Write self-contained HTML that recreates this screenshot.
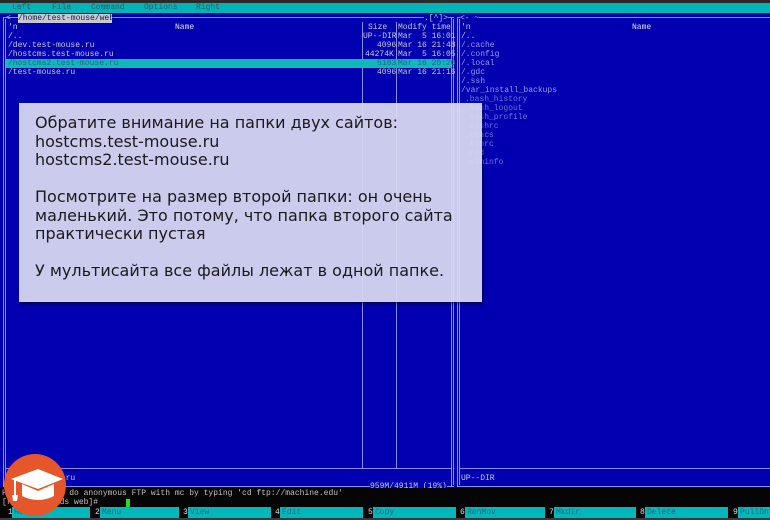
<!DOCTYPE html>
<html><head><meta charset="utf-8"><style>
*{margin:0;padding:0;box-sizing:border-box}
body{width:770px;height:520px;overflow:hidden;background:#0000b0;position:relative;font-family:"Liberation Mono",monospace;font-size:8px;color:#c8c8d8}
.a{position:absolute;white-space:pre;line-height:9px}
.top{position:absolute;left:0;top:0;width:770px;height:3px;background:#2a2a2a}
.menu{position:absolute;left:0;top:3px;width:770px;height:10px;background:#00b4b8;color:#2a5a6a}
.l{position:absolute;background:#8c8ce0}
.blk{position:absolute;left:0;top:488px;width:770px;height:32px;background:#050505}
.fk{position:absolute;top:507px;height:11px;background:#00b8bc;color:#1a6a7a;padding-left:2px;line-height:11px}
.fn{position:absolute;top:507px;color:#ddd;line-height:11px}
.box{position:absolute;left:19px;top:103px;width:463px;height:199px;background:rgba(218,218,242,0.93);box-shadow:1px 2px 3px rgba(0,0,0,.5);font-family:"DejaVu Sans",sans-serif;font-size:16px;color:#1a1a1a;padding:11px 0 0 16px;line-height:18.5px;white-space:pre}
</style></head><body>
<div class="top"></div>
<div class="menu"><span class="a" style="left:12px;top:0">Left</span><span class="a" style="left:52px;top:0">File</span><span class="a" style="left:91px;top:0">Command</span><span class="a" style="left:144px;top:0">Options</span><span class="a" style="left:196px;top:0">Right</span></div>
<div class="l" style="left:3px;top:17px;width:1px;height:470px"></div>
<div class="l" style="left:5px;top:19px;width:1px;height:466px"></div>
<div class="l" style="left:451px;top:17px;width:1px;height:470px"></div>
<div class="l" style="left:453px;top:19px;width:1px;height:466px"></div>
<div class="l" style="left:3px;top:17px;width:451px;height:1px"></div>
<div class="l" style="left:3px;top:486px;width:451px;height:1px"></div>
<div class="l" style="left:5px;top:468px;width:447px;height:1px"></div>
<div class="l" style="left:362px;top:22px;width:1px;height:446px"></div>
<div class="l" style="left:396px;top:22px;width:1px;height:446px"></div>
<div class="a" style="left:18px;top:14px;width:94px;height:9px;background:#c8c8d0;color:#1a1a50">/home/test-mouse/web</div>
<div class="a" style="left:6px;top:14px">&lt;</div>
<div class="a" style="left:424px;top:14px;background:#0000b0">.[^]&gt;</div>
<div class="a" style="left:8px;top:23px">'n</div>
<div class="a" style="left:175px;top:23px;color:#e0e0f0">Name</div>
<div class="a" style="left:368px;top:23px">Size</div>
<div class="a" style="left:398px;top:23px">Modify time</div>
<div class="a" style="left:8px;top:32px">/..</div><div class="a" style="left:363px;top:32px">UP--DIR</div><div class="a" style="left:398px;top:32px">Mar  5 16:01</div>
<div class="a" style="left:8px;top:41px">/dev.test-mouse.ru</div><div class="a" style="left:377px;top:41px">4096</div><div class="a" style="left:398px;top:41px">Mar 16 21:48</div>
<div class="a" style="left:8px;top:50px">/hostcms.test-mouse.ru</div><div class="a" style="left:365px;top:50px">44274K</div><div class="a" style="left:398px;top:50px">Mar  5 16:05</div>
<div style="position:absolute;left:6px;top:59px;width:445px;height:9px;background:#10b8b8"></div>
<div class="a" style="left:8px;top:59px;color:#1a6a8a">/hostcms2.test-mouse.ru</div><div class="a" style="left:377px;top:59px;color:#1a6a8a">5183</div><div class="a" style="left:398px;top:59px;color:#1a6a8a">Mar 16 20:20</div>
<div class="a" style="left:8px;top:68px">/test-mouse.ru</div><div class="a" style="left:377px;top:68px">4096</div><div class="a" style="left:398px;top:68px">Mar 16 21:16</div>
<div class="a" style="left:8px;top:474px">/test-mouse.ru</div>
<div class="a" style="left:370px;top:482px;background:#0000b0">959M/4911M (19%)</div>
<div class="l" style="left:457px;top:17px;width:1px;height:470px"></div>
<div class="l" style="left:459px;top:19px;width:1px;height:466px"></div>
<div class="l" style="left:457px;top:17px;width:313px;height:1px"></div>
<div class="l" style="left:457px;top:486px;width:313px;height:1px"></div>
<div class="l" style="left:459px;top:468px;width:311px;height:1px"></div>
<div class="a" style="left:460px;top:14px;background:#0000b0">&lt;- ~</div>
<div class="a" style="left:461px;top:23px">'n</div>
<div class="a" style="left:632px;top:23px;color:#e0e0f0">Name</div>
<div class="a" style="left:461px;top:32px">/..</div>
<div class="a" style="left:461px;top:41px;color:#9a9ae8">/.cache</div>
<div class="a" style="left:461px;top:50px;color:#9a9ae8">/.config</div>
<div class="a" style="left:461px;top:59px;color:#9a9ae8">/.local</div>
<div class="a" style="left:461px;top:68px;color:#9a9ae8">/.gdc</div>
<div class="a" style="left:461px;top:77px;color:#9a9ae8">/.ssh</div>
<div class="a" style="left:461px;top:86px;color:#9a9ae8">/var_install_backups</div>
<div class="a" style="left:465px;top:95px;color:#7070dc">.bash_history</div>
<div class="a" style="left:465px;top:104px;color:#7070dc">.bash_logout</div>
<div class="a" style="left:465px;top:113px;color:#7070dc">.bash_profile</div>
<div class="a" style="left:465px;top:122px;color:#7070dc">.bashrc</div>
<div class="a" style="left:465px;top:131px;color:#7070dc">.emacs</div>
<div class="a" style="left:465px;top:140px;color:#7070dc">.kshrc</div>
<div class="a" style="left:465px;top:149px;color:#7070dc">.rnd</div>
<div class="a" style="left:465px;top:158px;color:#7070dc">.viminfo</div>
<div class="a" style="left:461px;top:474px">UP--DIR</div>
<div class="blk"></div>
<div class="a" style="left:2px;top:489px;color:#c0c0c0">Hint: You can do anonymous FTP with mc by typing 'cd ftp://machine.edu'</div>
<div class="a" style="left:2px;top:498px;color:#c0c0c0">[root@mousevds web]# </div>
<div style="position:absolute;left:126px;top:499px;width:4px;height:8px;background:#22dd22"></div>
<div class="fn" style="left:8px">1</div><div class="fk" style="left:12px;width:78px">Help</div>
<div class="fn" style="left:95px">2</div><div class="fk" style="left:100px;width:79px">Menu</div>
<div class="fn" style="left:183px">3</div><div class="fk" style="left:188px;width:83px">View</div>
<div class="fn" style="left:275px">4</div><div class="fk" style="left:280px;width:83px">Edit</div>
<div class="fn" style="left:368px">5</div><div class="fk" style="left:373px;width:83px">Copy</div>
<div class="fn" style="left:460px">6</div><div class="fk" style="left:465px;width:80px">RenMov</div>
<div class="fn" style="left:549px">7</div><div class="fk" style="left:554px;width:82px">Mkdir</div>
<div class="fn" style="left:640px">8</div><div class="fk" style="left:645px;width:83px">Delete</div>
<div class="fn" style="left:733px">9</div><div class="fk" style="left:738px;width:32px">PullDn</div>
<div style="position:absolute;left:0;top:518px;width:770px;height:2px;background:#3a3a3a"></div>
<div class="box">Обратите внимание на папки двух сайтов:
hostcms.test-mouse.ru
hostcms2.test-mouse.ru

Посмотрите на размер второй папки: он очень
маленький. Это потому, что папка второго сайта
практически пустая

У мультисайта все файлы лежат в одной папке.</div>
<svg style="position:absolute;left:3px;top:453px" width="64" height="64" viewBox="0 0 64 64">
<circle cx="32" cy="32" r="31" fill="#e5562a"/>
<path d="M8 26 L35 16 L60 26 L35 36 Z" fill="#fff"/>
<path d="M19 31 L19 43 Q35 51 51 43 L51 31 L35 38 Z" fill="#fff"/>
<path d="M12 27 L12 42" stroke="#fff" stroke-width="2"/>
<path d="M9 42 L15 42 L14 48 L10 48 Z" fill="#fff"/>
</svg>
</body></html>
